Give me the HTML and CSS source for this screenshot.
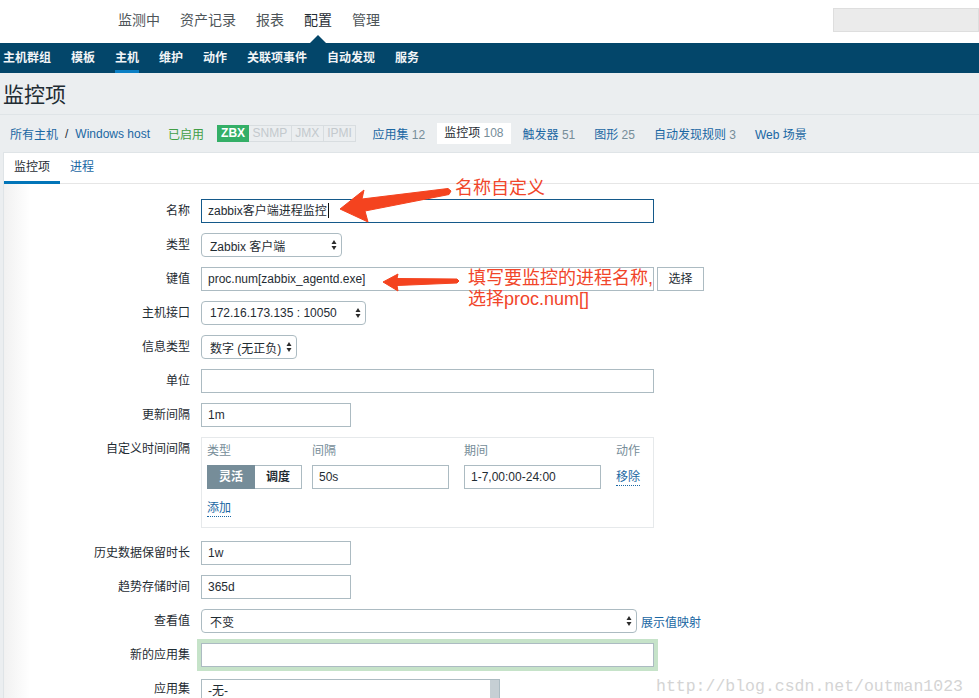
FILE: index.html
```html
<!DOCTYPE html>
<html lang="zh-CN">
<head>
<meta charset="utf-8">
<title>监控项</title>
<link rel="stylesheet" href="styles.css">
</head>
<body>
<header class="top">
  <nav class="top-nav">
    <a>监测中</a><a>资产记录</a><a>报表</a><a class="active">配置</a><a>管理</a>
  </nav>
  <div class="search"></div>
</header>
<nav class="sub-nav">
  <a>主机群组</a><a>模板</a><a class="active">主机</a><a>维护</a><a>动作</a><a>关联项事件</a><a>自动发现</a><a>服务</a>
</nav>
<main class="page">
  <h1 class="title">监控项</h1>
  <div class="host-bar">
    <a class="link">所有主机</a><span class="sep">/</span><a class="link">Windows host</a>
    <span class="enabled">已启用</span>
    <span class="status"><span class="st st-on">ZBX</span><span class="st">SNMP</span><span class="st">JMX</span><span class="st">IPMI</span></span>
    <ul class="host-nav">
      <li><a class="link">应用集</a> <span class="cnt">12</span></li>
      <li class="sel">监控项 <span class="cnt">108</span></li>
      <li><a class="link">触发器</a> <span class="cnt">51</span></li>
      <li><a class="link">图形</a> <span class="cnt">25</span></li>
      <li><a class="link">自动发现规则</a> <span class="cnt">3</span></li>
      <li><a class="link">Web 场景</a></li>
    </ul>
  </div>
  <section class="panel">
    <div class="tabs"><span class="tab active">监控项</span><span class="tab link">进程</span></div>
    <form class="form">
      <div class="row"><label class="lbl">名称</label><div class="fld"><div class="input w-full focus">zabbix客户端进程监控<span class="caret"></span></div></div></div>
      <div class="row"><label class="lbl">类型</label><div class="fld"><div class="select w-type"><span>Zabbix 客户端</span><svg class="updown" width="6" height="10" viewBox="0 0 6 10"><polygon points="0.5,4 3,0 5.5,4"/><polygon points="0.5,6 3,10 5.5,6"/></svg></div></div></div>
      <div class="row"><label class="lbl">键值</label><div class="fld"><div class="input w-full">proc.num[zabbix_agentd.exe]</div><span class="btn">选择</span></div></div>
      <div class="row"><label class="lbl">主机接口</label><div class="fld"><div class="select w-iface"><span>172.16.173.135 : 10050</span><svg class="updown" width="6" height="10" viewBox="0 0 6 10"><polygon points="0.5,4 3,0 5.5,4"/><polygon points="0.5,6 3,10 5.5,6"/></svg></div></div></div>
      <div class="row"><label class="lbl">信息类型</label><div class="fld"><div class="select w-info"><span>数字 (无正负)</span><svg class="updown" width="6" height="10" viewBox="0 0 6 10"><polygon points="0.5,4 3,0 5.5,4"/><polygon points="0.5,6 3,10 5.5,6"/></svg></div></div></div>
      <div class="row"><label class="lbl">单位</label><div class="fld"><div class="input w-full"></div></div></div>
      <div class="row"><label class="lbl">更新间隔</label><div class="fld"><div class="input w-sm">1m</div></div></div>
      <div class="row row-custom"><label class="lbl">自定义时间间隔</label><div class="fld">
        <div class="intervals">
          <span class="ih">类型</span><span class="ih">间隔</span><span class="ih">期间</span><span class="ih">动作</span>
          <div class="seg"><span class="on">灵活</span><span>调度</span></div>
          <div class="input w-int">50s</div>
          <div class="input w-int">1-7,00:00-24:00</div>
          <span class="act"><a class="link dotted">移除</a></span>
          <span class="add"><a class="link dotted">添加</a></span>
        </div>
      </div></div>
      <div class="row"><label class="lbl">历史数据保留时长</label><div class="fld"><div class="input w-sm">1w</div></div></div>
      <div class="row"><label class="lbl">趋势存储时间</label><div class="fld"><div class="input w-sm">365d</div></div></div>
      <div class="row"><label class="lbl">查看值</label><div class="fld"><div class="select w-view"><span>不变</span><svg class="updown" width="6" height="10" viewBox="0 0 6 10"><polygon points="0.5,4 3,0 5.5,4"/><polygon points="0.5,6 3,10 5.5,6"/></svg></div><a class="link map">展示值映射</a></div></div>
      <div class="row"><label class="lbl">新的应用集</label><div class="fld"><div class="input w-full glow"></div></div></div>
      <div class="row row-last"><label class="lbl">应用集</label><div class="fld"><div class="listbox"><span class="lb-text">-无-</span><span class="lb-scroll"></span></div></div></div>
    </form>
  </section>
</main>
<svg class="arrows" width="979" height="698" viewBox="0 0 979 698">
  <polygon points="340,209 364,190 362,199 448,188.5 451,191 449,194.5 365,211 368,222"/>
  <polygon points="383,282 398,274 397,278.5 457,279 459,281 457,283 397,285.5 398,291"/>
</svg>
<div class="note note1">名称自定义</div>
<div class="note note2">填写要监控的进程名称,<br>选择proc.num[]</div>
<div class="watermark">http://blog.csdn.net/outman1023</div>
</body>
</html>
```
FILE: styles.css
```css
* { box-sizing: border-box; margin: 0; padding: 0; }
html, body { width: 979px; height: 698px; overflow: hidden; }
body {
  font-family: "Liberation Sans", "Noto Sans CJK SC", sans-serif;
  font-size: 12px;
  color: #1f2c33;
  background: #ebeef0;
  position: relative;
}
a { color: inherit; text-decoration: none; }
ul { list-style: none; }

/* top header */
.top { height: 43px; background: #fff; display: flex; align-items: flex-start; }
.top-nav { display: flex; gap: 20px; margin-left: 118px; padding-top: 11px; font-size: 14px; line-height: 18px; }
.top-nav a { color: #4e5559; position: relative; }
.top-nav a.active { color: #1f2c33; }
.top-nav a.active::after {
  content: ""; position: absolute; left: 50%; margin-left: -8px; top: 24px;
  border-left: 8px solid transparent; border-right: 8px solid transparent; border-bottom: 8px solid #03466a;
}
.search { margin-left: auto; margin-top: 8px; width: 146px; height: 24px; background: #ebebeb; border: 1px solid #dedede; }

.sub-nav { height: 30px; background: #03466a; display: flex; gap: 20px; padding-left: 3px; line-height: 30px; font-weight: bold; color: #f2f5f7; }
.sub-nav a.active { box-shadow: inset 0 -3px 0 #0b7fc4; }

/* title + host bar */
.title { font-size: 21px; font-weight: normal; height: 42px; padding: 3px 0 0 3px; line-height: 38px; border-bottom: 1px solid #dfe4e7; color: #1f2c33; }
.host-bar { height: 37px; display: flex; align-items: center; padding-left: 10px; white-space: nowrap; }
.link { color: #1a67a3; }
.sep { margin: 0 7px; }
.enabled { margin-left: 18px; color: #429e47; }
.status { margin-left: 13px; display: flex; }
.st { border: 1px solid #d8dde0; border-left-width: 0; padding: 0 3.5px; line-height: 15px; color: #c3c9cd; }
.st-on { background: #34af67; border: 1px solid #34af67; color: #fff; font-weight: bold; padding: 0 3px; }
.host-nav { display: flex; gap: 19px; margin-left: 16px; align-items: center; }
.cnt { color: #768d99; }
.host-nav .sel { background: #fff; padding: 0 7px; margin: 0 -7px; line-height: 21px; color: #1f2c33; }

/* panel */
.panel { margin-left: 3px; background: #fff; border-left: 1px solid #dfe4e7; border-top: 1px solid #dfe4e7; }
.tabs { display: flex; border-bottom: 1px solid #e6e6e6; }
.tab { line-height: 28px; padding: 0 10px; border-bottom: 3px solid transparent; margin-bottom: -1px; }
.tab.active { border-bottom-color: #0275b8; color: #1f2c33; }

.form { padding-top: 15px; background: linear-gradient(to right, #f1f1f1, #fff 26px); }
.row { display: grid; grid-template-columns: 186px 1fr; column-gap: 11px; margin-bottom: 10px; }
.row-custom { margin-bottom: 13px; }
.row-last { margin-bottom: 0; }
.lbl { text-align: right; line-height: 24px; white-space: nowrap; }
.fld { display: flex; align-items: center; }

.input { height: 24px; border: 1px solid #acbbc2; background: #fff; padding: 0 6px; line-height: 22px; white-space: nowrap; overflow: hidden; }
.input.focus { border-color: #14598a; }
.caret { display: inline-block; width: 1px; height: 15px; background: #111; vertical-align: -3px; margin-left: 1px; }
.w-full { width: 453px; }
.w-sm { width: 150px; }
.w-int { width: 137px; }
.select { height: 24px; border: 1px solid #acbbc2; border-radius: 4px; background: #fff; padding: 0 4px 0 8px; display: flex; align-items: center; justify-content: space-between; white-space: nowrap; }
.updown { fill: #2b2b2b; flex: none; }
.w-type { width: 141px; }
.w-iface { width: 165px; }
.w-info { width: 96px; }
.w-view { width: 436px; }
.btn { margin-left: 3px; width: 47px; height: 24px; border: 1px solid #acbbc2; background: #fff; text-align: center; line-height: 22px; }
.map { margin-left: 4px; }
.glow { box-shadow: 0 0 0 4px #c6e3c9; }

.intervals { width: 453px; border: 1px solid #e6e9eb; padding: 5px 6px 11px 5px; display: grid; grid-template-columns: 105px 152px 152px auto; }
.ih { color: #768d99; line-height: 16px; margin-bottom: 6px; }
.seg { display: flex; font-weight: bold; }
.seg span { height: 24px; line-height: 22px; border: 1px solid #acbbc2; border-left-width: 0; text-align: center; width: 47px; }
.seg span.on { background: #768d99; border: 1px solid #768d99; color: #fff; width: 48px; }
.act { line-height: 24px; }
.add { grid-column: 1 / -1; margin-top: 11px; line-height: 16px; }
.dotted { border-bottom: 1px dotted #1a67a3; padding-bottom: 1px; }

.listbox { width: 299px; height: 21px; border: 1px solid #acbbc2; border-bottom-width: 0; display: flex; }
.lb-text { flex: 1; padding: 0 6px; line-height: 22px; }
.lb-scroll { width: 9px; background: #c6cfd4; }

/* annotations */
.arrows { position: absolute; left: 0; top: 0; pointer-events: none; }
.arrows polygon { fill: #f4431f; stroke: #f4431f; stroke-width: 1; stroke-linejoin: round; }
.note { position: absolute; color: #f1452a; font-size: 18px; font-family: "Liberation Sans", "Noto Sans CJK SC", sans-serif; white-space: nowrap; }
.note1 { left: 455px; top: 177px; line-height: 22px; }
.note2 { left: 468px; top: 268px; line-height: 21px; }
.watermark { position: absolute; left: 656px; top: 676px; font-family: "Liberation Mono", monospace; font-size: 16.5px; line-height: 22px; color: #d4d4d4; }
```
